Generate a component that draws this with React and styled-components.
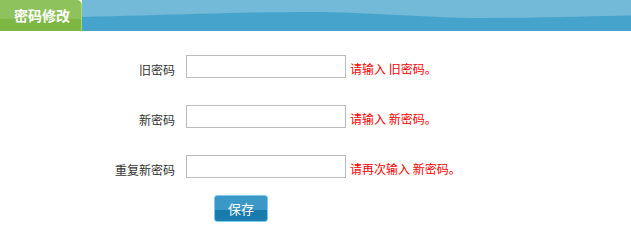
import styled, { createGlobalStyle } from "styled-components";

const GlobalStyle = createGlobalStyle`
  body {
    margin: 0;
    background: #fff;
    font-family: "Noto Sans CJK SC", "Liberation Sans", sans-serif;
    font-size: 12px;
  }
`;

const fields = [
  { label: "旧密码", hint: "请输入 旧密码。" },
  { label: "新密码", hint: "请输入 新密码。" },
  { label: "重复新密码", hint: "请再次输入 新密码。" },
];

export default function App() {
  return (
    <Page>
      <GlobalStyle />
      <Header>
        <TitleTab>密码修改</TitleTab>
        <WaveBar>
          <svg width="100%" height="100%" viewBox="0 0 548 31" preserveAspectRatio="none">
            <path
              d="M0,17 C80,15 160,12 227,12 C290,12 340,18 400,18 C460,18 510,16 548,15.5 L548,31 L0,31 Z"
              fill="#46a4cc"
            />
          </svg>
        </WaveBar>
      </Header>
      <Form>
        {fields.map((f) => (
          <Row key={f.label}>
            <Label>{f.label}</Label>
            <Input type="password" />
            <Hint>{f.hint}</Hint>
          </Row>
        ))}
        <SaveButton>保存</SaveButton>
      </Form>
    </Page>
  );
}

const Page = styled.div`
  width: 631px;
`;

const Header = styled.div`
  display: flex;
  height: 31px;
`;

const TitleTab = styled.div`
  width: 82px;
  box-sizing: border-box;
  border-right: 1px solid #a6dc6c;
  border-top-right-radius: 5px;
  background: linear-gradient(to bottom, #8ec25c 0, #8ec25c 19px, #7cb743 19px, #7cb743 100%);
  color: #fff;
  font-size: 14px;
  font-weight: bold;
  line-height: 31px;
  padding-left: 14px;
  letter-spacing: 0px;
`;

const WaveBar = styled.div`
  flex: 1;
  background: #73b9d8;
  svg {
    display: block;
  }
`;

const Form = styled.div`
  padding-top: 24px;
  display: flex;
  flex-direction: column;
`;

const Row = styled.div`
  display: flex;
  align-items: center;
  height: 23px;
  margin-bottom: 27px;
  &:nth-of-type(3) {
    margin-bottom: 17px;
  }
`;

const Label = styled.div`
  width: 186px;
  box-sizing: border-box;
  padding-right: 11px;
  padding-top: 6px;
  text-align: right;
  color: #333;
`;

const Input = styled.input`
  width: 160px;
  height: 23px;
  box-sizing: border-box;
  border: 1px solid #bbb;
  margin: 0;
  padding: 0 3px;
  outline: none;
`;

const Hint = styled.span`
  margin-left: 4px;
  padding-top: 4px;
  color: #f00;
`;

const SaveButton = styled.button`
  margin-left: 214px;
  width: 54px;
  height: 27px;
  box-sizing: border-box;
  border: 1px solid #7fcaee;
  border-radius: 3px;
  background: linear-gradient(to bottom, #3a97c6 0, #3a97c6 55%, #1878aa 55%, #1a7db0 100%);
  color: #fff;
  font-family: "Noto Sans CJK SC", sans-serif;
  font-size: 13px;
  padding: 0;
  align-self: flex-start;
`;
